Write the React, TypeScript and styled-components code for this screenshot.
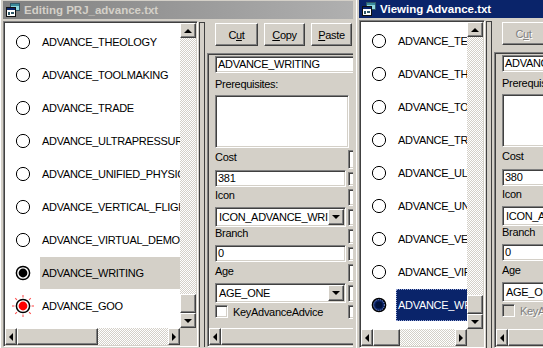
import React from "react";
import styled, { createGlobalStyle, css } from "styled-components";

const FACE = "#d4d0c8";
const SHADOW = "#808080";
const DARK = "#404040";
const NAVY = "#0a246a";

const GlobalStyle = createGlobalStyle`
  * { box-sizing: border-box; }
  html, body { margin: 0; padding: 0; background: #3a6ea5; }
  body {
    font-family: "Liberation Sans", Arial, sans-serif;
    font-size: 11px;
    letter-spacing: -0.3px;
    color: #000;
  }
`;

const raised = css`
  border: 1px solid;
  border-color: #fff ${DARK} ${DARK} #fff;
  box-shadow: inset -1px -1px 0 ${SHADOW}, inset 1px 1px 0 ${FACE};
  background: ${FACE};
`;

const sunken = css`
  border: 1px solid;
  border-color: ${SHADOW} #fff #fff ${SHADOW};
  box-shadow: inset 1px 1px 0 ${DARK}, inset -1px -1px 0 ${FACE};
  padding: 1px;
`;

const checker = css`
  background-color: #fff;
  background-image: repeating-conic-gradient(${FACE} 0% 25%, #fff 0% 50%);
  background-size: 2px 2px;
`;

const Desktop = styled.div`
  position: relative;
  width: 543px;
  height: 348px;
  overflow: hidden;
  background: #3a6ea5;
`;

const Frame = styled.div<{ $x: number; $y: number; $w: number; $h: number }>`
  position: absolute;
  left: ${(p) => p.$x}px;
  top: ${(p) => p.$y}px;
  width: ${(p) => p.$w}px;
  height: ${(p) => p.$h}px;
  background: ${FACE};
  border: 1px solid;
  border-color: ${FACE} ${DARK} ${DARK} ${FACE};
  box-shadow: inset 1px 1px 0 #fff, inset -1px -1px 0 ${SHADOW};
  padding: 3px;
  display: flex;
  flex-direction: column;
`;

const TitleBar = styled.div<{ $active: boolean }>`
  height: 18px;
  flex: none;
  display: flex;
  align-items: center;
  gap: 3px;
  padding: 0 2px;
  background: ${(p) =>
    p.$active
      ? `linear-gradient(to right, ${NAVY} 55%, #a6caf0)`
      : `linear-gradient(to right, #808080, #b0b0b0)`};
  color: ${(p) => (p.$active ? "#fff" : FACE)};
  font-weight: bold;
  font-size: 11.5px;
  letter-spacing: 0;
  white-space: nowrap;
`;

const Body = styled.div`
  flex: 1;
  min-height: 0;
  display: flex;
  padding-top: 2px;
  overflow: hidden;
`;

const ListBox = styled.div<{ $w: number }>`
  ${sunken};
  width: ${(p) => p.$w}px;
  flex: none;
  display: grid;
  grid-template-columns: 1fr 16px;
  grid-template-rows: 1fr 17px;
  background: ${FACE};
`;

const Viewport = styled.div`
  background: #fff;
  overflow: hidden;
  padding-top: 2px;
  min-width: 0;
`;

const Row = styled.div`
  height: 33px;
  display: flex;
  align-items: center;
`;

const RadioCell = styled.div`
  width: 35px;
  flex: none;
  display: flex;
  justify-content: center;
`;

const ItemLabel = styled.div<{ $sel?: "grey" | "navy" }>`
  flex: none;
  width: 300px;
  height: 32px;
  display: flex;
  align-items: center;
  padding-left: 2px;
  white-space: nowrap;
  ${(p) => p.$sel === "grey" && css`background: ${FACE};`}
  ${(p) =>
    p.$sel === "navy" &&
    css`
      background: ${NAVY};
      color: #fff;
      border: 1px dotted #9aa8d8;
      padding-left: 1px;
    `}
`;

const VScroll = styled.div`
  display: flex;
  flex-direction: column;
`;

const HScroll = styled.div`
  display: flex;
  height: 17px;
`;

const Corner = styled.div`
  background: ${FACE};
`;

const SBtn = styled.div<{ $w: number; $h: number }>`
  ${raised};
  width: ${(p) => p.$w}px;
  height: ${(p) => p.$h}px;
  flex: none;
  display: flex;
  align-items: center;
  justify-content: center;
`;

const Thumb = styled.div<{ $w?: number; $h?: number; $grow?: boolean }>`
  ${raised};
  flex: ${(p) => (p.$grow ? 1 : "none")};
  ${(p) => p.$w && css`width: ${p.$w}px;`}
  ${(p) => p.$h && css`height: ${p.$h}px;`}
`;

const Track = styled.div`
  ${checker};
  flex: 1;
`;

const Arrow = styled.span<{ $dir: "up" | "down" | "left" | "right" }>`
  width: 0;
  height: 0;
  border: 4px solid transparent;
  ${(p) => p.$dir === "up" && css`border-bottom-color: #000; border-top-width: 0;`}
  ${(p) => p.$dir === "down" && css`border-top-color: #000; border-bottom-width: 0;`}
  ${(p) => p.$dir === "left" && css`border-right-color: #000; border-left-width: 0;`}
  ${(p) => p.$dir === "right" && css`border-left-color: #000; border-right-width: 0;`}
`;

const Splitter = styled.div`
  width: 6px;
  flex: none;
  margin: 1px 2px 0 1px;
  border: 1px solid ${DARK};
  border-bottom: none;
  background: ${FACE};
`;

const Pane = styled.div`
  flex: 1;
  min-width: 0;
  display: flex;
  flex-direction: column;
  overflow: hidden;
`;

const Toolbar = styled.div`
  display: flex;
  gap: 6px;
  padding: 2px 0 0 8px;
  flex: none;
`;

const Button = styled.div<{ $w: number; $off?: boolean }>`
  ${raised};
  width: ${(p) => p.$w}px;
  height: 23px;
  flex: none;
  display: flex;
  align-items: center;
  justify-content: center;
  ${(p) => p.$off && css`color: ${SHADOW}; text-shadow: 1px 1px 0 #fff;`}
`;

const FormPanel = styled.div`
  ${sunken};
  flex: 1;
  min-height: 0;
  margin: 7px -40px 0 0;
  display: flex;
  flex-direction: column;
  overflow: hidden;
`;

const FormBody = styled.div`
  flex: 1;
  min-height: 0;
  padding: 1px 0 0 6px;
`;

const TextBox = styled.div<{ $w: number; $h?: number }>`
  ${sunken};
  background: #fff;
  width: ${(p) => p.$w}px;
  height: ${(p) => p.$h ?? 17}px;
  padding: 1px 0 0 2px;
  line-height: 13px;
  white-space: nowrap;
  overflow: hidden;
`;

const Label = styled.div<{ $h: number }>`
  height: ${(p) => p.$h}px;
  padding-top: 2px;
  line-height: 13px;
  white-space: nowrap;
`;

const FormRow = styled.div<{ $h: number }>`
  height: ${(p) => p.$h}px;
  display: grid;
  grid-template-columns: 131px 14px;
  column-gap: 2px;
`;

const SideBox = styled.div`
  ${sunken};
  background: #fff;
  margin: 2px 0 1px;
`;

const Combo = styled.div`
  ${sunken};
  background: #fff;
  height: 20px;
  display: flex;
  align-items: center;
  padding: 1px;
`;

const ComboText = styled.div`
  flex: 1;
  min-width: 0;
  padding-left: 2px;
  white-space: nowrap;
  overflow: hidden;
`;

const CheckRow = styled.div<{ $off?: boolean }>`
  display: flex;
  align-items: center;
  gap: 5px;
  height: 17px;
  white-space: nowrap;
  ${(p) => p.$off && css`color: ${SHADOW}; text-shadow: 1px 1px 0 #fff;`}
`;

const CheckBox = styled.div<{ $off?: boolean }>`
  ${sunken};
  width: 13px;
  height: 13px;
  flex: none;
  background: ${(p) => (p.$off ? FACE : "#fff")};
`;

type RadioKind = "off" | "on" | "red" | "hl";

function Radio({ kind }: { kind: RadioKind }) {
  const rays = [0, 45, 90, 135, 180, 225, 270, 315];
  return (
    <svg width="24" height="24" viewBox="0 0 24 24">
      {kind === "red" &&
        rays.map((a) => {
          const r = (a * Math.PI) / 180;
          return (
            <line
              key={a}
              x1={12 + Math.cos(r) * 8.6}
              y1={12 + Math.sin(r) * 8.6}
              x2={12 + Math.cos(r) * 11}
              y2={12 + Math.sin(r) * 11}
              stroke="#ff5050"
              strokeWidth="1.1"
            />
          );
        })}
      <circle
        cx="12"
        cy="12"
        r="6.6"
        fill={kind === "hl" ? NAVY : "#fff"}
        stroke="#000"
        strokeWidth={kind === "off" ? 1 : 1.5}
      />
      {kind === "on" && <circle cx="12" cy="12" r="4.4" fill="#000" />}
      {kind === "red" && <circle cx="12" cy="12" r="4.4" fill="#ff0000" />}
      {kind === "hl" && (
        <>
          <circle cx="12" cy="12" r="5.4" fill="none" stroke="#b8c2e8" strokeWidth="0.8" strokeDasharray="1 1" />
          <circle cx="12" cy="12" r="3.6" fill="#00103a" />
        </>
      )}
    </svg>
  );
}

function WinIcon() {
  return (
    <svg width="16" height="16" viewBox="0 0 16 16">
      <rect x="5.5" y="1.5" width="9" height="7" fill="#8fd8e0" stroke="#305868" />
      <rect x="6" y="2" width="8" height="2" fill="#3a8a9a" />
      <rect x="1.5" y="5.5" width="9" height="9" fill="#fff" stroke="#101010" />
      <rect x="2" y="6" width="8" height="2" fill={NAVY} />
      <rect x="3" y="10" width="2" height="3" fill="#305868" />
      <rect x="6" y="10" width="3" height="2" fill="#305868" />
    </svg>
  );
}

type Item = { name: string; kind: RadioKind; sel?: "grey" | "navy" };

type Fields = {
  name: string;
  cost: string;
  icon: string;
  branch: string;
  age: string;
};

function ListPane({ w, items, hThumb }: { w: number; items: Item[]; hThumb: number }) {
  return (
    <ListBox $w={w}>
      <Viewport>
        {items.map((it) => (
          <Row key={it.name}>
            <RadioCell>
              <Radio kind={it.kind} />
            </RadioCell>
            <ItemLabel $sel={it.sel}>{it.name}</ItemLabel>
          </Row>
        ))}
      </Viewport>
      <VScroll>
        <SBtn $w={16} $h={15}>
          <Arrow $dir="up" />
        </SBtn>
        <Track />
        <Thumb $h={19} />
        <SBtn $w={16} $h={15}>
          <Arrow $dir="down" />
        </SBtn>
      </VScroll>
      <HScroll>
        <SBtn $w={12} $h={17}>
          <Arrow $dir="left" />
        </SBtn>
        <Thumb $w={hThumb} />
        <Track />
        <SBtn $w={12} $h={17}>
          <Arrow $dir="right" />
        </SBtn>
      </HScroll>
      <Corner />
    </ListBox>
  );
}

function FormPane({ f, off }: { f: Fields; off?: boolean }) {
  return (
    <Pane>
      <Toolbar>
        <Button $w={43} $off={off}>
          C<u>u</u>t
        </Button>
        <Button $w={41} $off={off}>
          <u>C</u>opy
        </Button>
        <Button $w={41} $off={off}>
          <u>P</u>aste
        </Button>
      </Toolbar>
      <FormPanel>
        <FormBody>
          <TextBox $w={160}>{f.name}</TextBox>
          <Label $h={22} style={{ paddingTop: 5 }}>
            Prerequisites:
          </Label>
          <TextBox $w={134} $h={53} />
          <FormRow $h={22}>
            <Label $h={22} style={{ paddingTop: 3 }}>Cost</Label>
            <SideBox />
          </FormRow>
          <FormRow $h={17}>
            <TextBox $w={131}>{f.cost}</TextBox>
            <SideBox />
          </FormRow>
          <FormRow $h={20}>
            <Label $h={20}>Icon</Label>
            <SideBox />
          </FormRow>
          <FormRow $h={20}>
            <Combo>
              <ComboText>{f.icon}</ComboText>
              <SBtn $w={16} $h={16}>
                <Arrow $dir="down" />
              </SBtn>
            </Combo>
            <SideBox />
          </FormRow>
          <FormRow $h={18}>
            <Label $h={18} style={{ paddingTop: 0 }}>Branch</Label>
            <SideBox />
          </FormRow>
          <FormRow $h={17}>
            <TextBox $w={131}>{f.branch}</TextBox>
            <SideBox />
          </FormRow>
          <FormRow $h={21}>
            <Label $h={21} style={{ paddingTop: 3 }}>Age</Label>
            <SideBox />
          </FormRow>
          <FormRow $h={20}>
            <Combo>
              <ComboText>{f.age}</ComboText>
              <SBtn $w={16} $h={16}>
                <Arrow $dir="down" />
              </SBtn>
            </Combo>
            <SideBox />
          </FormRow>
          <FormRow $h={17}>
            <CheckRow $off={off}>
              <CheckBox $off={off} />
              KeyAdvanceAdvice
            </CheckRow>
            <SideBox />
          </FormRow>
        </FormBody>
        <HScroll>
          <SBtn $w={12} $h={17}>
            <Arrow $dir="left" />
          </SBtn>
          <Thumb $grow />
        </HScroll>
      </FormPanel>
    </Pane>
  );
}

type WinProps = {
  x: number;
  y: number;
  w: number;
  h: number;
  active: boolean;
  title: string;
  listW: number;
  hThumb: number;
  items: Item[];
  fields: Fields;
  off?: boolean;
};

function EditorWindow(p: WinProps) {
  return (
    <Frame $x={p.x} $y={p.y} $w={p.w} $h={p.h}>
      <TitleBar $active={p.active}>
        <WinIcon />
        {p.title}
      </TitleBar>
      <Body>
        <ListPane w={p.listW} items={p.items} hThumb={p.hThumb} />
        <Splitter />
        <FormPane f={p.fields} off={p.off} />
      </Body>
    </Frame>
  );
}

const editItems: Item[] = [
  { name: "ADVANCE_THEOLOGY", kind: "off" },
  { name: "ADVANCE_TOOLMAKING", kind: "off" },
  { name: "ADVANCE_TRADE", kind: "off" },
  { name: "ADVANCE_ULTRAPRESSURE_MACHINERY", kind: "off" },
  { name: "ADVANCE_UNIFIED_PHYSICS", kind: "off" },
  { name: "ADVANCE_VERTICAL_FLIGHT", kind: "off" },
  { name: "ADVANCE_VIRTUAL_DEMOCRACY", kind: "off" },
  { name: "ADVANCE_WRITING", kind: "on", sel: "grey" },
  { name: "ADVANCE_GOO", kind: "red" },
];

const viewItems: Item[] = [
  { name: "ADVANCE_TERRAFORMING", kind: "off" },
  { name: "ADVANCE_THEOLOGY", kind: "off" },
  { name: "ADVANCE_TOOLMAKING", kind: "off" },
  { name: "ADVANCE_TRADE", kind: "off" },
  { name: "ADVANCE_ULTRAPRESSURE_MACHINERY", kind: "off" },
  { name: "ADVANCE_UNIFIED_PHYSICS", kind: "off" },
  { name: "ADVANCE_VERTICAL_FLIGHT", kind: "off" },
  { name: "ADVANCE_VIRTUAL_DEMOCRACY", kind: "off" },
  { name: "ADVANCE_WRITING", kind: "hl", sel: "navy" },
];

export default function App() {
  return (
    <>
      <GlobalStyle />
      <Desktop>
        <EditorWindow
          x={-1}
          y={-3}
          w={358}
          h={354}
          active={false}
          title="Editing PRJ_advance.txt"
          listW={195}
          hThumb={81}
          items={editItems}
          fields={{
            name: "ADVANCE_WRITING",
            cost: "381",
            icon: "ICON_ADVANCE_WRITING",
            branch: "0",
            age: "AGE_ONE",
          }}
        />
        <EditorWindow
          x={355}
          y={-4}
          w={358}
          h={356}
          active
          title="Viewing Advance.txt"
          listW={126}
          hThumb={27}
          items={viewItems}
          off
          fields={{
            name: "ADVANCE_WRITING",
            cost: "380",
            icon: "ICON_ADVANCE_WRITING",
            branch: "0",
            age: "AGE_ONE",
          }}
        />
      </Desktop>
    </>
  );
}
